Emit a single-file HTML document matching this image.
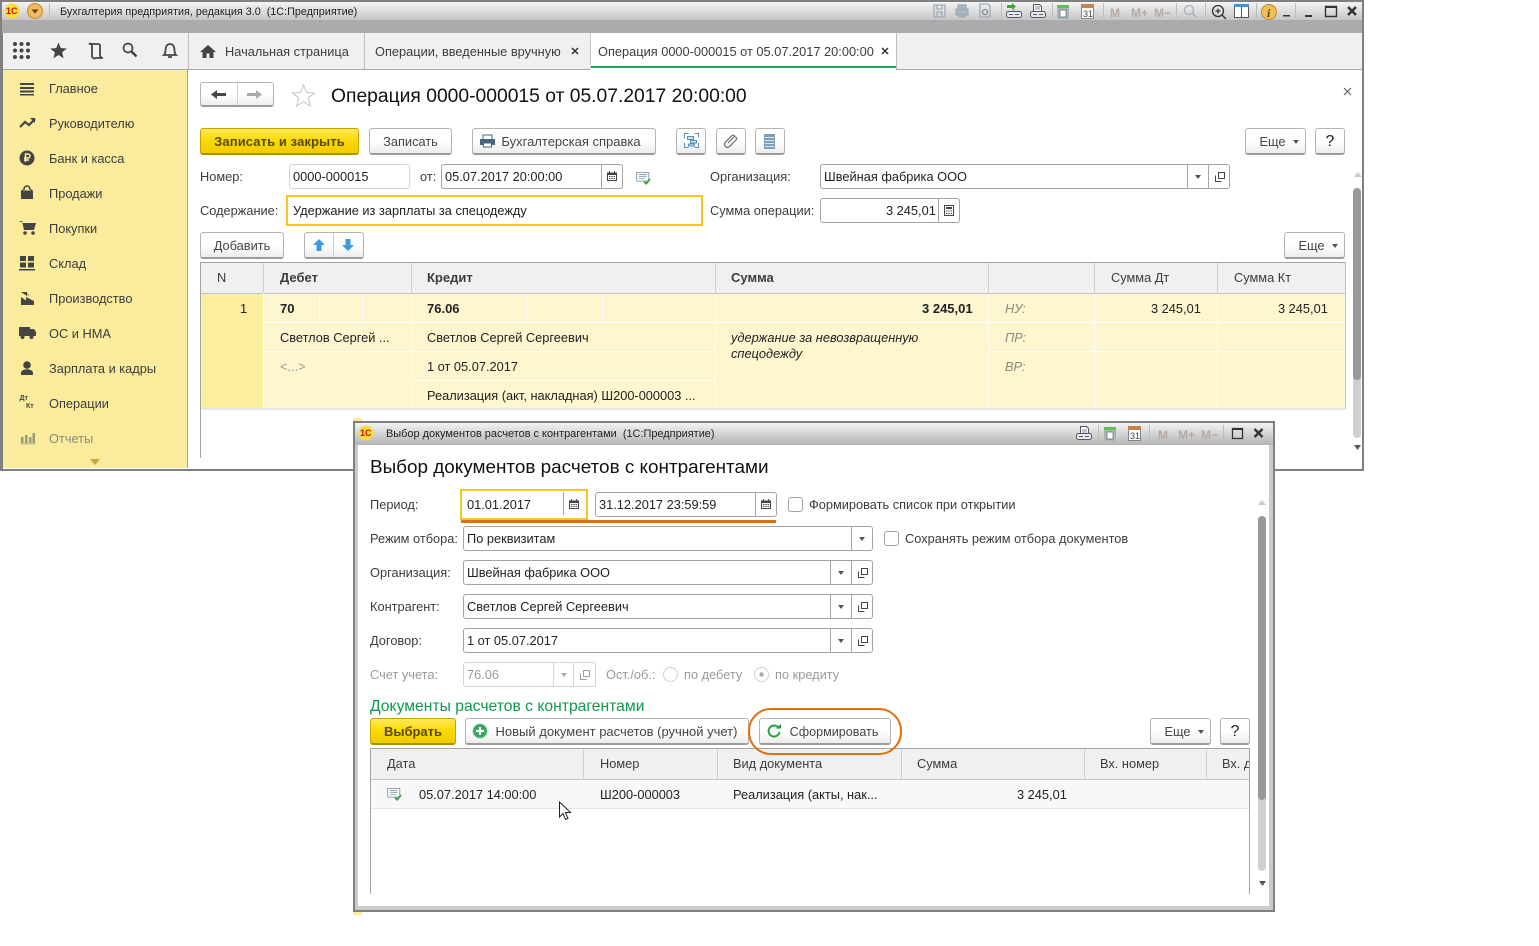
<!DOCTYPE html>
<html><head><meta charset="utf-8"><style>
html,body{margin:0;padding:0;background:#fff}
#r{position:relative;width:1539px;height:946px;overflow:hidden;background:#fff;font:12.8px/16px "Liberation Sans",sans-serif;color:#3c3c3c}
#r div,#r svg{position:absolute}
.t{white-space:nowrap}
.d{color:#222}
.g{color:#9a9a9a}
.tb{font-size:13px;font-weight:bold}
.b{box-sizing:border-box;border:1px solid #b4b4b4;border-bottom:2px solid #9c9c9c;border-radius:3px;background:linear-gradient(#fff,#fff 50%,#ececec);text-align:center;line-height:26px;white-space:nowrap;color:#444}
.y{box-sizing:border-box;border:1px solid #c5a500;border-bottom:2px solid #ab9000;border-radius:3px;background:linear-gradient(#ffe95a,#fad900 50%,#f2cb00);text-align:center;line-height:25px;font-size:13px;font-weight:bold;color:#5a4a10;white-space:nowrap}
.f{box-sizing:border-box;border:1px solid #a4a4a4;border-radius:3px;background:#fff}
.l{background:#a4a4a4;width:1px}
.w{background:#fff}
.h{background:#cfcfcf}
.s{width:1px;height:15px;background:#bdbdbd;top:3px}
</style></head><body><div id="r">
<svg width="0" height="0" style="left:0;top:0"><defs>
<symbol id="cal" viewBox="0 0 10 10"><path d="M0 1.500h10v8.500H0z" fill="#444"/><path d="M2 0h1v2H2zM7 0h1v2H7z" fill="#444"/><path d="M1 4h8v5H1z" fill="#fff"/><path d="M2 5h1.400v1H2zM4.300 5h1.400v1H4.300zM6.600 5H8v1H6.600zM2 7h1.400v1H2zM4.300 7h1.400v1H4.300zM6.600 7H8v1H6.600z" fill="#444"/></symbol>
<symbol id="op" viewBox="0 0 12 12"><path d="M1.500 4.500v6h6M4.500 1.500h6v6h-6z" fill="none" stroke="#444" stroke-width="1"/></symbol>
<symbol id="doc" viewBox="0 0 18 15"><path d="M.5.500h14v10H.500z" fill="#fff" stroke="#7f99a8"/><path d="M3 3h9M3 5h9M3 7.500h7" stroke="#7f99a8"/><path d="M9 11l2.500 2.500L16 8" fill="none" stroke="#2fa53b" stroke-width="2"/></symbol>
<symbol id="1c" viewBox="0 0 16 16"><circle cx="8" cy="8" r="7.500" fill="#f9dd3a"/><text x="2" y="11" font-size="9" font-weight="bold" fill="#d01010" font-family="Liberation Sans">1С</text></symbol>
<symbol id="tape" viewBox="0 0 16 16"><path d="M4.500 1.500h6l2 2v5h-8z" fill="#fff" stroke="#556"/><path d="M6 5h5M6 7h5" stroke="#889"/><rect x=".5" y="8.500" width="15" height="6" rx="2" fill="#e8ecef" stroke="#556"/><path d="M3 11.500h4M9 11.500h4" stroke="#556"/></symbol>
</defs></svg>

<!-- main window frame -->
<div style="left:0;top:0;width:1364px;height:471px;background:#808080"></div>
<div style="left:3px;top:2px;width:1359px;height:467px;background:#fff"></div>
<div style="left:2px;top:2px;width:1360px;height:18px;background:linear-gradient(#f4f4f4,#c6c6c6)"></div>
<div style="left:2px;top:20px;width:1360px;height:13px;background:#ababae"></div>
<svg style="left:4px;top:3px" width="16" height="16"><use href="#1c"/></svg>
<svg style="left:27px;top:3px" width="16" height="16"><circle cx="8" cy="8" r="7.500" fill="#f3b95e" stroke="#b98a30"/><path d="M4.500 6.500h7L8 10.500z" fill="#5a4020"/></svg>
<div class="s" style="left:49px"></div>
<div class="t" style="left:60px;top:4px;font-size:10.800px;color:#222">Бухгалтерия предприятия, редакция 3.0&nbsp; (1С:Предприятие)</div>
<!-- title toolbar icons -->
<div class="s" style="left:1001px"></div><div class="s" style="left:1052px"></div><div class="s" style="left:1103px"></div><div class="s" style="left:1176px"></div><div class="s" style="left:1205px"></div><div class="s" style="left:1256px"></div><div class="s" style="left:1295px"></div>
<svg style="left:930px;top:2px" width="430" height="18" fill="none">
<g stroke="#9fadb8" stroke-width="1.300"><path d="M4 3h11v12H4zM7 3v4h5V3M7 15v-5h5v5"/><path d="M28 7V3h8v4M26 7h12v6H26zM29 12h6v3h-6z" fill="#a9b4bc"/><path d="M50 2h8l2 2v11H50z"/></g><circle cx="55" cy="10" r="2.500" stroke="#7f8d98" stroke-width="1.300"/>
<path d="M82 1l4 3.500-4 3.500V6h-5V3h5z" fill="#35a835"/><path d="M84 8.500v-1M80 9v0" stroke="#555"/><rect x="76.500" y="9.500" width="15" height="6" rx="2" fill="#e8ecef" stroke="#556"/><path d="M79 12.500h4M85 12.500h4" stroke="#556"/>
<path d="M103.500 2.500h6l2 2v5h-8z" fill="#fff" stroke="#556"/><path d="M105 5h5M105 7h5" stroke="#889"/><rect x="100.500" y="9.500" width="15" height="6" rx="2" fill="#e8ecef" stroke="#556"/><path d="M103 12.500h4M109 12.500h4" stroke="#556"/>
<path d="M127 3h12v14h-12z" fill="#aab6bd"/><path d="M127 3h12v3h-12z" fill="#5cc353"/><path d="M130 8h6v7h-6z" fill="#fff" stroke="#666" stroke-width=".700"/>
<path d="M151.500 5.500h12v11h-12z" fill="#fff" stroke="#789"/><path d="M151 2h13v4h-13z" fill="#c8824a"/>
<text x="153" y="15" font-size="9" fill="#444" font-family="Liberation Sans">31</text>
<text x="180" y="15" font-size="12" font-weight="bold" fill="#b5aba5" font-family="Liberation Sans">M</text><text x="201" y="15" font-size="12" font-weight="bold" fill="#b5aba5" font-family="Liberation Sans">M+</text><text x="224" y="15" font-size="12" font-weight="bold" fill="#b5aba5" font-family="Liberation Sans">M−</text>
<g stroke="#a4b0b8" stroke-width="1.300"><circle cx="259" cy="8" r="4.500"/><path d="M262 11l4 4"/></g>
<g stroke="#333" stroke-width="1.300"><circle cx="288" cy="9" r="5.500"/><path d="M292 13l4 4M285.500 9h5M288 6.500v5"/></g>
<path d="M304.500 2.500h14v13h-14z" fill="#fff" stroke="#555"/><path d="M304 2h15v3h-15z" fill="#3f94d6"/><path d="M311.500 5v10" stroke="#555"/>
<circle cx="339" cy="10" r="7.500" fill="#f3c04e" stroke="#c08a30"/><text x="337" y="15" font-size="12" font-weight="bold" font-style="italic" fill="#444" font-family="Liberation Serif">i</text>
<path d="M353 13h7v1.500h-7zM375 13h7v2h-7z" fill="#333" stroke="none"/>
<path d="M395.500 4.500h11v10h-11z" stroke="#333" stroke-width="1.400"/><path d="M395 4h12v2h-12z" fill="#333"/>
<path d="M418 5l8 8M426 5l-8 8" stroke="#333" stroke-width="2.400"/>
</svg>
<!-- top tool panel -->
<div style="left:3px;top:33px;width:1359px;height:36px;background:#f0f0f0"></div>
<div style="left:3px;top:69px;width:1359px;height:1px;background:#a8a8a8"></div>
<svg style="left:12px;top:41px" width="170" height="20">
<g fill="#444"><circle cx="3" cy="3" r="2"/><circle cx="9.500" cy="3" r="2"/><circle cx="16" cy="3" r="2"/><circle cx="3" cy="9.500" r="2"/><circle cx="9.500" cy="9.500" r="2"/><circle cx="16" cy="9.500" r="2"/><circle cx="3" cy="16" r="2"/><circle cx="9.500" cy="16" r="2"/><circle cx="16" cy="16" r="2"/>
<path d="M46.500 1.500l2.300 5.600 6 .4-4.700 3.900 1.500 5.800-5.100-3.200-5.100 3.200 1.500-5.800-4.700-3.900 6-.4z"/></g>
<path d="M77 3c2-1 3 0 3 2v10c0 2 2 3 4 2h7c-2 0-3-1-3-3V5c0-2-1-2-3-2z" fill="none" stroke="#444" stroke-width="1.800"/>
<circle cx="116" cy="7" r="4.500" fill="none" stroke="#444" stroke-width="1.700"/><path d="M119.500 10.500l5 5" stroke="#444" stroke-width="2.500"/>
<path d="M152 14c2-2 1-4 2-8 .5-2 2.500-3 4-3s3.500 1 4 3c1 4 0 6 2 8zM156 16h4" fill="none" stroke="#444" stroke-width="1.800"/>
</svg>
<div style="left:188px;top:33px;width:1px;height:36px;background:#bcbcbc"></div>
<svg style="left:200px;top:44px" width="16" height="14"><path d="M8 1L0 8h2.500v6h4V9.500h3V14h4V8H16z" fill="#444"/></svg>
<div class="t" style="left:225px;top:44px">Начальная страница</div>
<div style="left:364px;top:33px;width:1px;height:36px;background:#bcbcbc"></div>
<div class="t" style="left:375px;top:44px">Операции, введенные вручную</div>
<svg style="left:571px;top:47px" width="8" height="8"><path d="M1 1l6 6M7 1L1 7" stroke="#333" stroke-width="1.500"/></svg>
<div style="left:590px;top:33px;width:306px;height:37px;background:#fff"></div>
<div style="left:590px;top:33px;width:1px;height:36px;background:#c8c8c8"></div>
<div style="left:896px;top:33px;width:1px;height:36px;background:#bcbcbc"></div>
<div style="left:591px;top:66px;width:305px;height:2px;background:#1ea760"></div>
<div class="t" style="left:598px;top:44px">Операция 0000-000015 от 05.07.2017 20:00:00</div>
<svg style="left:881px;top:47px" width="8" height="8"><path d="M1 1l6 6M7 1L1 7" stroke="#333" stroke-width="1.500"/></svg>

<!-- sidebar -->
<div style="left:3px;top:70px;width:184px;height:398px;background:#fbeb9d"></div>
<div style="left:187px;top:70px;width:1px;height:398px;background:#c8aa3c"></div>
<svg style="left:18px;top:78px" width="20" height="375" fill="#444">
<path d="M2 5h14v2H2zM2 9h14v2H2zM2 12.500h14v2H2zM2 16h14v1.500H2z"/>
<path d="M2 49l5-5 4 3 6-6" fill="none" stroke="#444" stroke-width="2.200"/><path d="M12 40h5v5z"/>
<circle cx="9" cy="80" r="7.500"/><path d="M7.500 84v-8h2.500a2 2 0 010 4H6M6 82h5" fill="none" stroke="#fbeb9d" stroke-width="1.500"/>
<path d="M3 113h12v8H3zM3 113l2-2v2zM15 113l-2-2v2z"/><path d="M6 112v-1a3 3 0 016 0v1" fill="none" stroke="#444" stroke-width="1.500"/><path d="M3 112.500h12v1H3z"/>
<path d="M1 143h3l2 9h10l2-7H5"/><circle cx="7" cy="155" r="1.800"/><circle cx="15" cy="155" r="1.800"/>
<path d="M2 178h6v5H2zM10 178h6v5h-6zM2 184.500h6v5H2zM10 184.500h6v5h-6zM1 191h16v1.500H1z"/>
<path d="M3 227v-8l5 3.500v-3.500l8 4v4z"/><path d="M3 214l6 0 0 4z M3 214h4l5 4"/>
<path d="M1 249h11v9H1zM12 251h4l2 3v4h-6z"/><circle cx="4.500" cy="259" r="2"/><circle cx="13.500" cy="259" r="2"/>
<circle cx="9" cy="287" r="3.800"/><path d="M3 295c0-5 12-5 12 0v2H3z"/>
<text x="1.500" y="322" font-size="7" font-weight="bold" font-family="Liberation Sans">Дт</text><text x="8" y="330" font-size="7" font-weight="bold" font-family="Liberation Sans">Кт</text>
<path d="M3 359h2.500v6H3zM7 357h2.500v8H7zM11 359h2.500v6H11zM14.500 355H17v10h-2.500zM2 365.500h16v.800H2z" fill="#9a9a7a"/>
</svg>
<div class="t" style="left:49px;top:81px">Главное</div>
<div class="t" style="left:49px;top:116px">Руководителю</div>
<div class="t" style="left:49px;top:151px">Банк и касса</div>
<div class="t" style="left:49px;top:186px">Продажи</div>
<div class="t" style="left:49px;top:221px">Покупки</div>
<div class="t" style="left:49px;top:256px">Склад</div>
<div class="t" style="left:49px;top:291px">Производство</div>
<div class="t" style="left:49px;top:326px">ОС и НМА</div>
<div class="t" style="left:49px;top:361px">Зарплата и кадры</div>
<div class="t" style="left:49px;top:396px">Операции</div>
<div class="t" style="left:49px;top:431px;color:#8a8a78">Отчеты</div>
<svg style="left:90px;top:459px" width="10" height="6"><path d="M0 0h10L5 6z" fill="#c8a83a"/></svg>

<!-- form header -->
<div class="b" style="left:200px;top:82px;width:74px;height:25px"></div>
<div class="h" style="left:237px;top:83px;width:1px;height:22px"></div>
<svg style="left:211px;top:89px" width="60" height="11"><path d="M0 5.500L6 1v3h9v3H6v3z" fill="#444"/><path d="M51 5.500L45 1v3h-9v3h9v3z" fill="#aaa"/></svg>
<svg style="left:291px;top:83px" width="25" height="24"><path d="M12.500 2l3 7.500 8 .5-6.200 5 2 8-6.800-4.300L5.700 23l2-8L1.500 10l8-.5z" fill="#fff" stroke="#c4c4c4"/></svg>
<div class="t" style="left:331px;top:85px;font-size:19.300px;line-height:23px;color:#111">Операция 0000-000015 от 05.07.2017 20:00:00</div>
<svg style="left:1343px;top:87px" width="9" height="9"><path d="M1 1l7 7M8 1L1 8" stroke="#555" stroke-width="1"/></svg>

<div class="y" style="left:200px;top:128px;width:159px;height:27px;letter-spacing:.1px">Записать и закрыть</div>
<div class="b" style="left:369px;top:128px;width:83px;height:27px">Записать</div>
<div class="b" style="left:472px;top:128px;width:184px;height:27px;padding-left:14px;font-size:13px">Бухгалтерская справка</div>
<svg style="left:480px;top:134px" width="15" height="14"><path d="M3 5V1h9v4" fill="#fff" stroke="#47657f"/><path d="M0 5h15v6h-3v-2H3v2H0z" fill="#47657f"/><path d="M3.500 9h8v4h-8z" fill="#fff" stroke="#47657f"/></svg>
<div class="b" style="left:676px;top:128px;width:30px;height:27px"></div>
<svg style="left:684px;top:133px" width="15" height="15" fill="none" stroke="#5d8fb2"><path d="M4.500.5h-4v5M10.500.5h4v4M.5 10v4.500h4M14.500 10v4.500h-4"/><path d="M3.500 3.500h6v3h-6zM6.500 7.500h6v2.500h-6zM4.500 11h6v2h-6z" fill="#cfe0eb"/></svg>
<div class="b" style="left:716px;top:128px;width:30px;height:27px"></div>
<svg style="left:723px;top:134px" width="15" height="15" fill="none" stroke="#777" stroke-width="1.300"><path d="M12 2c-1-1-2.500-1-3.500 0L2.500 8c-1.500 1.500-1.500 3 0 4.500s3 1 4 0L13 6c.8-1 .8-2 0-2.700s-2-.5-2.500 0L5 9"/></svg>
<div class="b" style="left:755px;top:128px;width:30px;height:27px"></div>
<svg style="left:764px;top:134px" width="11" height="15"><path d="M0 0h11v15H0z" fill="#7f9fb5"/><path d="M1 3.500h9M1 6.500h9M1 9.500h9M1 12.500h9" stroke="#dfe8ee"/></svg>
<div class="b" style="left:1245px;top:128px;width:61px;height:27px;padding-right:6px">Еще</div>
<svg style="left:1293px;top:140px" width="6" height="4"><path d="M0 0h6L3 4z" fill="#555"/></svg>
<div class="b" style="left:1315px;top:128px;width:30px;height:27px;font-size:16px;color:#222">?</div>

<div class="t" style="left:200px;top:169px">Номер:</div>
<div class="f" style="left:289px;top:164px;width:121px;height:25px;border-color:#d4d4d4"></div>
<div class="t d" style="left:293px;top:169px">0000-000015</div>
<div class="t" style="left:420px;top:169px">от:</div>
<div class="f" style="left:441px;top:164px;width:182px;height:25px"></div>
<div class="l" style="left:601px;top:165px;height:23px"></div>
<div class="t d" style="left:445px;top:169px">05.07.2017 20:00:00</div>
<svg style="left:607px;top:171px" width="10" height="10"><use href="#cal"/></svg>
<svg style="left:636px;top:172px" width="16" height="13"><use href="#doc"/></svg>
<div class="t" style="left:710px;top:169px">Организация:</div>
<div class="f" style="left:820px;top:164px;width:410px;height:25px"></div>
<div class="l" style="left:1187px;top:165px;height:23px"></div>
<div class="l" style="left:1208px;top:165px;height:23px"></div>
<div class="t d" style="left:824px;top:169px">Швейная фабрика ООО</div>
<svg style="left:1195px;top:175px" width="6" height="4"><path d="M0 0h6L3 4z" fill="#555"/></svg>
<svg style="left:1214px;top:171px" width="12" height="12"><use href="#op"/></svg>

<div class="t" style="left:200px;top:203px">Содержание:</div>
<div style="box-sizing:border-box;left:286px;top:195px;width:417px;height:31px;border:2px solid #f7c61f;background:#fff"></div>
<div class="t d" style="left:293px;top:203px">Удержание из зарплаты за спецодежду</div>
<div class="t" style="left:710px;top:203px">Сумма операции:</div>
<div class="f" style="left:820px;top:198px;width:140px;height:25px"></div>
<div class="l" style="left:938px;top:199px;height:23px"></div>
<div class="t d" style="left:886px;top:203px">3 245,01</div>
<svg style="left:944px;top:205px" width="10" height="11"><path d="M.5.500h9v10h-9z" fill="#fff" stroke="#444"/><path d="M2 2h6v2H2zM2 5.500h1.300v1H2zM4.300 5.500h1.300v1H4.300zM6.700 5.500H8v1H6.700zM2 8h1.300v1H2zM4.300 8h1.300v1H4.300zM6.700 8H8v1H6.700z" fill="#444"/></svg>

<div class="b" style="left:200px;top:232px;width:84px;height:27px">Добавить</div>
<div class="b" style="left:304px;top:232px;width:60px;height:27px"></div>
<div class="h" style="left:333px;top:233px;width:1px;height:24px"></div>
<svg style="left:312px;top:238px" width="44" height="14"><path d="M7 1l6 6H9.500v6h-5V7H1z" fill="#3d9ae0"/><path d="M36 13l-6-6h3.500V1h5v6H42z" fill="#3d9ae0"/></svg>
<div class="b" style="left:1284px;top:232px;width:61px;height:27px;padding-right:6px">Еще</div>
<svg style="left:1332px;top:244px" width="6" height="4"><path d="M0 0h6L3 4z" fill="#555"/></svg>

<!-- main table -->
<div style="left:200px;top:262px;width:1145px;height:1px;background:#a4a4a4"></div>
<div style="left:200px;top:262px;width:1px;height:196px;background:#a4a4a4"></div>
<div style="left:1345px;top:262px;width:1px;height:147px;background:#c4c4c4"></div>
<div style="left:201px;top:263px;width:1144px;height:30px;background:#f0f0f0"></div>
<div style="left:201px;top:293px;width:1144px;height:1px;background:#c4c4c4"></div>
<div style="left:201px;top:294px;width:1144px;height:114px;background:#fdf6cf"></div>
<div style="left:201px;top:294px;width:62px;height:114px;background:#fdee9f"></div>
<div class="w" style="left:263px;top:263px;width:1px;height:145px"></div>
<div class="h" style="left:263px;top:263px;width:1px;height:30px"></div>
<div class="h" style="left:411px;top:263px;width:1px;height:30px"></div>
<div class="h" style="left:715px;top:263px;width:1px;height:30px"></div>
<div class="h" style="left:988px;top:263px;width:1px;height:30px"></div>
<div class="h" style="left:1094px;top:263px;width:1px;height:30px"></div>
<div class="h" style="left:1217px;top:263px;width:1px;height:30px"></div>
<div class="w" style="left:411px;top:294px;width:1px;height:114px"></div>
<div class="w" style="left:715px;top:294px;width:1px;height:114px"></div>
<div class="w" style="left:988px;top:294px;width:1px;height:114px"></div>
<div class="w" style="left:1094px;top:294px;width:1px;height:114px"></div>
<div class="w" style="left:1217px;top:294px;width:1px;height:114px"></div>
<div class="w" style="left:319px;top:294px;width:1px;height:28px"></div>
<div class="w" style="left:362px;top:294px;width:1px;height:28px"></div>
<div class="w" style="left:526px;top:294px;width:1px;height:28px"></div>
<div class="w" style="left:602px;top:294px;width:1px;height:28px"></div>
<div class="w" style="left:264px;top:322px;width:1081px;height:1px"></div>
<div class="w" style="left:264px;top:351px;width:451px;height:1px"></div>
<div class="w" style="left:988px;top:351px;width:357px;height:1px"></div>
<div class="w" style="left:412px;top:380px;width:303px;height:1px"></div>
<div style="left:201px;top:408px;width:1144px;height:2px;background:#e6e6e6"></div>
<div class="t" style="left:217px;top:270px">N</div>
<div class="t tb" style="left:280px;top:270px">Дебет</div>
<div class="t tb" style="left:427px;top:270px">Кредит</div>
<div class="t tb" style="left:731px;top:270px">Сумма</div>
<div class="t" style="left:1111px;top:270px">Сумма Дт</div>
<div class="t" style="left:1234px;top:270px">Сумма Кт</div>
<div class="t d" style="left:240px;top:301px">1</div>
<div class="t d tb" style="left:280px;top:301px">70</div>
<div class="t d tb" style="left:427px;top:301px">76.06</div>
<div class="t d tb" style="left:922px;top:301px">3 245,01</div>
<div class="t" style="left:1005px;top:301px;font-style:italic;color:#8a8a80">НУ:</div>
<div class="t d" style="left:1151px;top:301px">3 245,01</div>
<div class="t d" style="left:1278px;top:301px">3 245,01</div>
<div class="t d" style="left:280px;top:330px">Светлов Сергей ...</div>
<div class="t d" style="left:427px;top:330px">Светлов Сергей Сергеевич</div>
<div class="t d" style="left:731px;top:330px;font-style:italic">удержание за невозвращенную</div>
<div class="t d" style="left:731px;top:346px;font-style:italic">спецодежду</div>
<div class="t" style="left:1005px;top:330px;font-style:italic;color:#8a8a80">ПР:</div>
<div class="t g" style="left:280px;top:359px">&lt;...&gt;</div>
<div class="t d" style="left:427px;top:359px">1 от 05.07.2017</div>
<div class="t" style="left:1005px;top:359px;font-style:italic;color:#8a8a80">ВР:</div>
<div class="t d" style="left:427px;top:388px">Реализация (акт, накладная) Ш200-000003 ...</div>
<!-- main scrollbar -->
<svg style="left:1354px;top:172px" width="8" height="6"><path d="M4 0l4 5H0z" fill="#ccc"/></svg>
<div style="left:1353px;top:188px;width:8px;height:250px;border-radius:4px;background:#d0d0d0"></div>
<div style="left:1353px;top:188px;width:8px;height:192px;border-radius:4px;background:#999"></div>
<svg style="left:1354px;top:445px" width="7" height="5"><path d="M0 0h7L3.500 5z" fill="#555"/></svg>

<!-- dialog -->
<div style="left:353px;top:418px;width:9px;height:3px;background:#fbeb9d"></div>
<div style="left:353px;top:912px;width:9px;height:3px;background:#fbeb9d"></div>
<div style="left:353px;top:421px;width:922px;height:491px;background:#808080"></div>
<div style="left:355px;top:423px;width:918px;height:487px;background:#cbcbcb"></div>
<div style="left:355px;top:423px;width:918px;height:22px;background:linear-gradient(#f2f2f2,#b4b4b4)"></div>
<div style="left:358px;top:445px;width:911px;height:461px;background:#fff"></div>
<svg style="left:358px;top:425px" width="16" height="16"><use href="#1c"/></svg>
<div class="t" style="left:386px;top:426px;font-size:10.950px;color:#222">Выбор документов расчетов с контрагентами&nbsp; (1С:Предприятие)</div>
<div class="s" style="left:1098px;top:425px"></div><div class="s" style="left:1149px;top:425px"></div><div class="s" style="left:1223px;top:425px"></div>
<svg style="left:1076px;top:425px" width="16" height="16"><use href="#tape"/></svg>
<svg style="left:1075px;top:424px" width="195" height="18" fill="none">
<path d="M29 3h12v14H29z" fill="#aab6bd"/><path d="M29 3h12v3H29z" fill="#5cc353"/><path d="M32 8h6v7h-6z" fill="#fff" stroke="#666" stroke-width=".700"/>
<path d="M53.500 5.500h12v11h-12z" fill="#fff" stroke="#789"/><path d="M53 2h13v4H53z" fill="#c8824a"/>
<text x="55" y="15" font-size="9" fill="#444" font-family="Liberation Sans">31</text>
<text x="83" y="15" font-size="12" font-weight="bold" fill="#b5aba5" font-family="Liberation Sans">M</text><text x="103" y="15" font-size="12" font-weight="bold" fill="#b5aba5" font-family="Liberation Sans">M+</text><text x="126" y="15" font-size="12" font-weight="bold" fill="#b5aba5" font-family="Liberation Sans">M−</text>
<path d="M157.500 4.500h10v10h-10z" stroke="#333" stroke-width="1.300"/><path d="M157 4h11v2h-11z" fill="#333"/>
<path d="M179.500 5l8 8M187.500 5l-8 8" stroke="#333" stroke-width="2.400"/>
</svg>
<div class="t" style="left:370px;top:457px;font-size:18.900px;line-height:22px;color:#111">Выбор документов расчетов с контрагентами</div>

<div class="t" style="left:370px;top:497px">Период:</div>
<div style="box-sizing:border-box;left:460px;top:489px;width:128px;height:31px;border:2px solid #f7c61f;background:#fff"></div>
<div class="l" style="left:563px;top:492px;height:23px"></div>
<div class="t d" style="left:467px;top:497px">01.01.2017</div>
<svg style="left:569px;top:499px" width="10" height="10"><use href="#cal"/></svg>
<div class="f" style="left:595px;top:492px;width:182px;height:25px"></div>
<div class="l" style="left:755px;top:493px;height:23px"></div>
<div class="t d" style="left:599px;top:497px">31.12.2017 23:59:59</div>
<svg style="left:761px;top:499px" width="10" height="10"><use href="#cal"/></svg>
<div style="left:461px;top:520px;width:315px;height:3px;background:#e0700f"></div>
<div class="f" style="left:788px;top:497px;width:15px;height:15px"></div>
<div class="t" style="left:809px;top:497px">Формировать список при открытии</div>

<div class="t" style="left:370px;top:531px">Режим отбора:</div>
<div class="f" style="left:463px;top:526px;width:410px;height:25px"></div>
<div class="l" style="left:851px;top:527px;height:23px"></div>
<div class="t d" style="left:467px;top:531px">По реквизитам</div>
<svg style="left:859px;top:537px" width="6" height="4"><path d="M0 0h6L3 4z" fill="#555"/></svg>
<div class="f" style="left:884px;top:531px;width:15px;height:15px"></div>
<div class="t" style="left:905px;top:531px">Сохранять режим отбора документов</div>

<div class="t" style="left:370px;top:565px">Организация:</div>
<div class="f" style="left:463px;top:560px;width:410px;height:25px"></div>
<div class="l" style="left:830px;top:561px;height:23px"></div>
<div class="l" style="left:851px;top:561px;height:23px"></div>
<div class="t d" style="left:467px;top:565px">Швейная фабрика ООО</div>
<svg style="left:838px;top:571px" width="6" height="4"><path d="M0 0h6L3 4z" fill="#555"/></svg>
<svg style="left:857px;top:567px" width="12" height="12"><use href="#op"/></svg>

<div class="t" style="left:370px;top:599px">Контрагент:</div>
<div class="f" style="left:463px;top:594px;width:410px;height:25px"></div>
<div class="l" style="left:830px;top:595px;height:23px"></div>
<div class="l" style="left:851px;top:595px;height:23px"></div>
<div class="t d" style="left:467px;top:599px">Светлов Сергей Сергеевич</div>
<svg style="left:838px;top:605px" width="6" height="4"><path d="M0 0h6L3 4z" fill="#555"/></svg>
<svg style="left:857px;top:601px" width="12" height="12"><use href="#op"/></svg>

<div class="t" style="left:370px;top:633px">Договор:</div>
<div class="f" style="left:463px;top:628px;width:410px;height:25px"></div>
<div class="l" style="left:830px;top:629px;height:23px"></div>
<div class="l" style="left:851px;top:629px;height:23px"></div>
<div class="t d" style="left:467px;top:633px">1 от 05.07.2017</div>
<svg style="left:838px;top:639px" width="6" height="4"><path d="M0 0h6L3 4z" fill="#555"/></svg>
<svg style="left:857px;top:635px" width="12" height="12"><use href="#op"/></svg>

<div class="t g" style="left:370px;top:667px">Счет учета:</div>
<div class="f" style="left:463px;top:662px;width:133px;height:25px;border-color:#d4d4d4"></div>
<div class="l" style="left:553px;top:663px;height:23px;background:#d4d4d4"></div>
<div class="l" style="left:573px;top:663px;height:23px;background:#d4d4d4"></div>
<div class="t g" style="left:467px;top:667px">76.06</div>
<svg style="left:561px;top:673px" width="6" height="4"><path d="M0 0h6L3 4z" fill="#aaa"/></svg>
<svg style="left:579px;top:669px;opacity:.5" width="12" height="12"><use href="#op"/></svg>
<div class="t g" style="left:606px;top:667px">Ост./об.:</div>
<svg style="left:662px;top:666px" width="110" height="17" fill="none" stroke="#d0d0d0"><circle cx="8.500" cy="8.500" r="7"/><circle cx="99.500" cy="8.500" r="7"/><circle cx="99.500" cy="8.500" r="2.200" fill="#aaa" stroke="none"/></svg>
<div class="t g" style="left:684px;top:667px">по дебету</div>
<div class="t g" style="left:775px;top:667px">по кредиту</div>

<div class="t" style="left:370px;top:697px;font-size:15.700px;line-height:19px;color:#0a9b4c">Документы расчетов с контрагентами</div>
<div class="y" style="left:370px;top:718px;width:86px;height:27px">Выбрать</div>
<div class="b" style="left:465px;top:718px;width:284px;height:27px;padding-left:19px;font-size:13px">Новый документ расчетов (ручной учет)</div>
<svg style="left:472px;top:723px" width="16" height="16"><circle cx="8" cy="8" r="7" fill="#35a45a" stroke="#7c9"/><path d="M8 4v8M4 8h8" stroke="#fff" stroke-width="2.200"/></svg>
<div class="b" style="left:759px;top:718px;width:132px;height:27px;padding-left:18px;font-size:12.600px">Сформировать</div>
<svg style="left:766px;top:723px" width="16" height="16" fill="none"><path d="M13 5.500A5.500 5.500 0 1 0 13.500 9" stroke="#2aa03a" stroke-width="2"/><path d="M9.500 5.500h5.500V1z" fill="#2aa03a"/></svg>
<div class="b" style="left:1150px;top:718px;width:61px;height:27px;padding-right:6px">Еще</div>
<svg style="left:1198px;top:730px" width="6" height="4"><path d="M0 0h6L3 4z" fill="#555"/></svg>
<div class="b" style="left:1220px;top:718px;width:30px;height:27px;font-size:16px;color:#222">?</div>

<!-- dialog table -->
<div style="left:370px;top:748px;width:880px;height:1px;background:#a4a4a4"></div>
<div style="left:370px;top:748px;width:1px;height:146px;background:#a4a4a4"></div>
<div style="left:1249px;top:748px;width:1px;height:146px;background:#a4a4a4"></div>
<div style="left:371px;top:749px;width:878px;height:30px;background:#f0f0f0"></div>
<div style="left:371px;top:779px;width:878px;height:1px;background:#c4c4c4"></div>
<div style="left:371px;top:780px;width:878px;height:28px;background:#f8f8f8"></div>
<div style="left:371px;top:808px;width:878px;height:1px;background:#e4e4e4"></div>
<div class="h" style="left:583px;top:749px;width:1px;height:30px"></div>
<div class="h" style="left:717px;top:749px;width:1px;height:30px"></div>
<div class="h" style="left:901px;top:749px;width:1px;height:30px"></div>
<div class="h" style="left:1084px;top:749px;width:1px;height:30px"></div>
<div class="h" style="left:1206px;top:749px;width:1px;height:30px"></div>
<div class="t" style="left:387px;top:756px">Дата</div>
<div class="t" style="left:600px;top:756px">Номер</div>
<div class="t" style="left:733px;top:756px">Вид документа</div>
<div class="t" style="left:917px;top:756px">Сумма</div>
<div class="t" style="left:1100px;top:756px">Вх. номер</div>
<div style="left:1222px;top:756px;width:27px;height:16px;overflow:hidden;white-space:nowrap">Вх. дата</div>
<svg style="left:387px;top:788px" width="16" height="13"><use href="#doc"/></svg>
<div class="t d" style="left:419px;top:787px">05.07.2017 14:00:00</div>
<div class="t d" style="left:600px;top:787px">Ш200-000003</div>
<div class="t d" style="left:733px;top:787px">Реализация (акты, нак...</div>
<div class="t d" style="left:1017px;top:787px">3 245,01</div>
<svg style="left:558px;top:801px" width="14" height="20"><path d="M1.500 1v15l3.500-3.500 2.500 6 2.500-1-2.500-6h5z" fill="#fff" stroke="#222"/></svg>
<svg style="left:747px;top:707px" width="156" height="49" fill="none"><rect x="2" y="2" width="152" height="45" rx="22" stroke="#e0700f" stroke-width="2"/></svg>
<!-- dialog scrollbar -->
<svg style="left:1258px;top:500px" width="8" height="6"><path d="M4 0l4 5H0z" fill="#ccc"/></svg>
<div style="left:1258px;top:516px;width:8px;height:355px;border-radius:4px;background:#d0d0d0"></div>
<div style="left:1258px;top:516px;width:8px;height:284px;border-radius:4px;background:#999"></div>
<svg style="left:1259px;top:881px" width="7" height="5"><path d="M0 0h7L3.500 5z" fill="#555"/></svg>
</div></body></html>
